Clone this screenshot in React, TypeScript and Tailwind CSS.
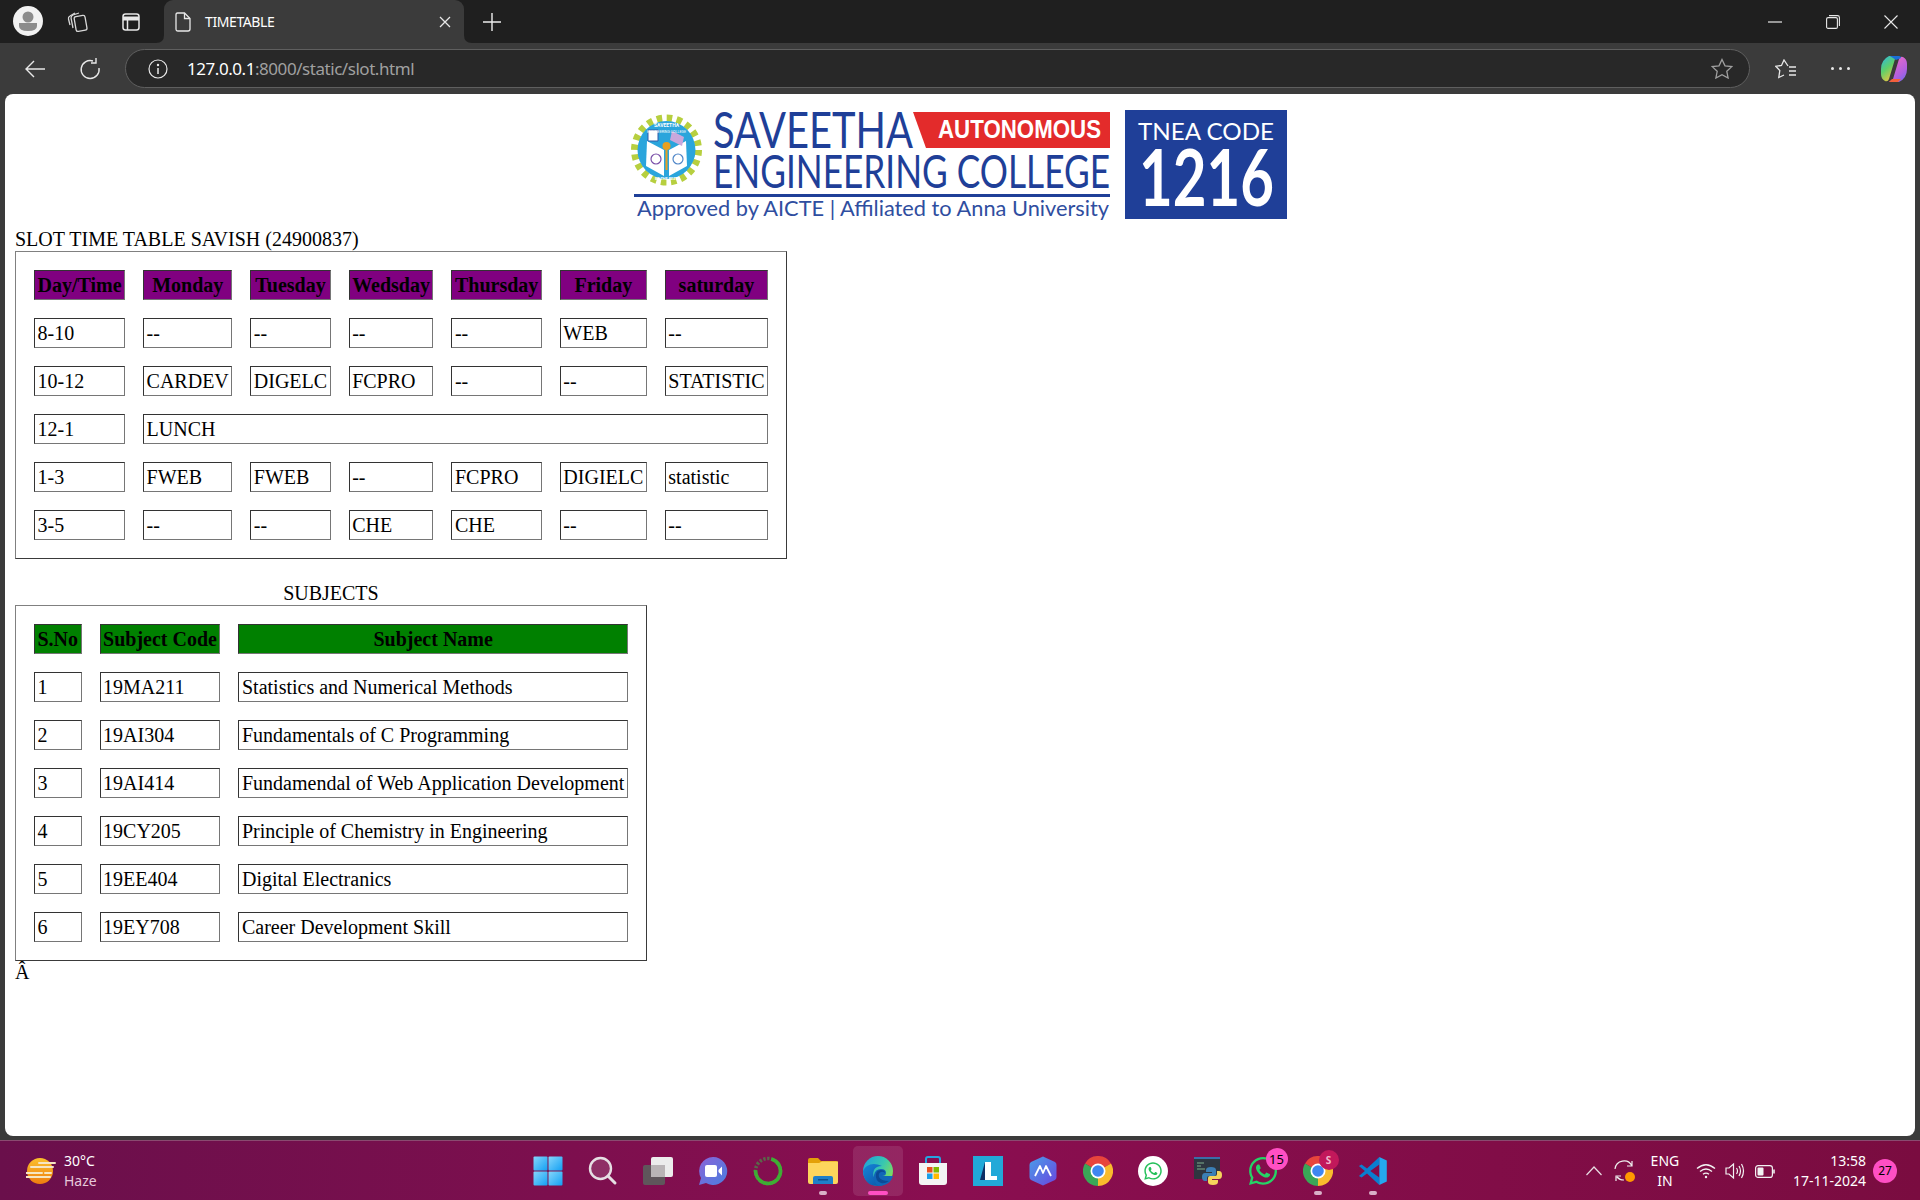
import { FaWhatsapp } from "react-icons/fa";

const chromeFont = { fontFamily: '"Noto Sans", "Open Sans", sans-serif' };

const timetable = [
  ["8-10", "--", "--", "--", "--", "WEB", "--"],
  ["10-12", "CARDEV", "DIGELC", "FCPRO", "--", "--", "STATISTIC"],
  ["12-1", "LUNCH"],
  ["1-3", "FWEB", "FWEB", "--", "FCPRO", "DIGIELC", "statistic"],
  ["3-5", "--", "--", "CHE", "CHE", "--", "--"],
];

const days = ["Day/Time", "Monday", "Tuesday", "Wedsday", "Thursday", "Friday", "saturday"];

const subjects = [
  ["1", "19MA211", "Statistics and Numerical Methods"],
  ["2", "19AI304", "Fundamentals of C Programming"],
  ["3", "19AI414", "Fundamendal of Web Application Development"],
  ["4", "19CY205", "Principle of Chemistry in Engineering"],
  ["5", "19EE404", "Digital Electranics"],
  ["6", "19EY708", "Career Development Skill"],
];

const tableCls =
  "border-separate border-spacing-[18px] border border-t-[#808080] border-l-[#808080] border-r-[#3a3a3a] border-b-[#3a3a3a]";
const cellCls =
  "border border-t-[#333333] border-l-[#333333] border-r-[#767676] border-b-[#767676] px-[2.5px] pt-[3px] pb-[2px] font-normal text-left";
const headCls =
  "border border-t-[#333333] border-l-[#333333] border-r-[#767676] border-b-[#767676] px-[2.5px] pt-[3px] pb-[2px] font-bold text-center";

function Logo() {
  return (
    <svg width="660" height="134" viewBox="630 94 660 134" className="block">
      <defs>
        <clipPath id="seal">
          <circle cx="666.5" cy="150" r="26" />
        </clipPath>
      </defs>
      {/* gear */}
      <circle cx="666.5" cy="150" r="32" fill="none" stroke="#b7cf3f" strokeWidth="7" strokeDasharray="5.5 4.55" />
      <circle cx="666.5" cy="150" r="29" fill="#2aa5dc" />
      <path d="M647 141 L664 150 V176 L646 166Z" fill="#fff" />
      <path d="M686 141 L669 150 V176 L687 166Z" fill="#fff" />
      <path d="M648 130 h10 v11 h-10z" fill="#fff" stroke="#2f5aa8" />
      <path d="M672 131 L684 137 L682 146 L670 140Z" fill="#c9a8dc" />
      <circle cx="656" cy="159" r="5" fill="none" stroke="#7a4fa8" strokeWidth="1.2" />
      <circle cx="678" cy="159" r="5" fill="none" stroke="#4f86c8" strokeWidth="1.2" />
      <path d="M666.5 146 V170" stroke="#e8a020" strokeWidth="2" />
      <circle cx="666.5" cy="146" r="4" fill="#e8a020" />
      <text x="666.5" y="127" textAnchor="middle" fontSize="5" fontWeight="700" fill="#fff" fontFamily="Roboto, sans-serif">
        SAVEETHA
      </text>
      <text x="666.5" y="133" textAnchor="middle" fontSize="3.6" fill="#fff" fontFamily="Roboto, sans-serif">
        ENGINEERING COLLEGE
      </text>
      <text x="666.5" y="180" textAnchor="middle" fontSize="3.8" fontWeight="700" fill="#fff" fontFamily="Roboto, sans-serif">
        BE THE BEST
      </text>

      {/* wordmark */}
      <text x="713" y="148" fontSize="50" fill="#1f3f98" textLength="200" lengthAdjust="spacingAndGlyphs" fontFamily="Lato, sans-serif">
        SAVEETHA
      </text>
      <path d="M913 112 L1110 112 V148 L926 148Z" fill="#e32b2b" />
      <text x="938" y="138" fontSize="25" fontWeight="700" fill="#fff" textLength="163" lengthAdjust="spacingAndGlyphs" fontFamily='"Liberation Sans", sans-serif'>
        AUTONOMOUS
      </text>
      <text x="713" y="188" fontSize="46" fill="#1f3f98" textLength="397" lengthAdjust="spacingAndGlyphs" fontFamily="Lato, sans-serif">
        ENGINEERING COLLEGE
      </text>
      <rect x="634" y="194" width="476" height="3" fill="#1f3f98" />
      <text x="637" y="216" fontSize="21" fill="#2f4ea0" textLength="472" lengthAdjust="spacingAndGlyphs" fontFamily="Lato, sans-serif">
        Approved by AICTE | Affiliated to Anna University
      </text>

      {/* code box */}
      <rect x="1125" y="110" width="162" height="109" fill="#1f3f98" />
      <text x="1138" y="140" fontSize="24" fill="#fff" textLength="136" lengthAdjust="spacingAndGlyphs" fontFamily="Lato, sans-serif">
        TNEA CODE
      </text>
      <text x="1139" y="206" fontSize="78" fontWeight="700" fill="#fff" textLength="135" lengthAdjust="spacingAndGlyphs" fontFamily="Lato, sans-serif">
        1216
      </text>
    </svg>
  );
}

function Copilot() {
  return (
    <svg width="28" height="28" viewBox="0 0 28 28">
      <defs>
        <linearGradient id="copA" x1="0" y1="0" x2="0.6" y2="1">
          <stop offset="0" stopColor="#2ab7e8" />
          <stop offset="0.5" stopColor="#5fd06a" />
          <stop offset="1" stopColor="#f6c23c" />
        </linearGradient>
        <linearGradient id="copB" x1="0.4" y1="0" x2="1" y2="1">
          <stop offset="0" stopColor="#e86ac8" />
          <stop offset="0.6" stopColor="#b05fe0" />
          <stop offset="1" stopColor="#6a6ce8" />
        </linearGradient>
      </defs>
      <path d="M9 1 H19 L15 4 L9 24 Q8 27 5 26 Q1 24 1 19 V14 Q1 5 9 1Z" fill="url(#copA)" />
      <path d="M19 27 H9 L13 24 L19 4 Q20 1 23 2 Q27 4 27 9 V14 Q27 23 19 27Z" fill="url(#copB)" />
      <path d="M10 1 H19 Q21 1 21 3 L16 5 Q13 3 10 1Z" fill="#1b6fd6" />
      <path d="M9 27 H18 L21 24 L12 24Z" fill="#f2603c" />
    </svg>
  );
}

function Chrome({ id }: { id: string }) {
  return (
    <svg width="30" height="30" viewBox="0 0 30 30" data-name={id}>
      <path d="M15 15 L2 7.5 A15 15 0 0 1 28 7.5Z" fill="#e8453c" />
      <path d="M15 15 L28 7.5 A15 15 0 0 1 15 30Z" fill="#f9bb2d" />
      <path d="M15 15 L15 30 A15 15 0 0 1 2 7.5Z" fill="#3aa757" />
      <circle cx="15" cy="15" r="7.5" fill="#fff" />
      <circle cx="15" cy="15" r="5.8" fill="#3f87f0" />
    </svg>
  );
}

function StartIcon() {
  return (
    <svg width="30" height="30" viewBox="0 0 30 30">
      <defs>
        <linearGradient id="win" x1="0" y1="0" x2="1" y2="1">
          <stop offset="0" stopColor="#86d6fb" />
          <stop offset="1" stopColor="#12a0f4" />
        </linearGradient>
      </defs>
      <rect x="0.5" y="0.5" width="14" height="14" rx="1" fill="url(#win)" />
      <rect x="15.5" y="0.5" width="14" height="14" rx="1" fill="url(#win)" />
      <rect x="0.5" y="15.5" width="14" height="14" rx="1" fill="url(#win)" />
      <rect x="15.5" y="15.5" width="14" height="14" rx="1" fill="url(#win)" />
    </svg>
  );
}

function SearchIcon() {
  return (
    <svg width="30" height="30" viewBox="0 0 30 30">
      <circle cx="12.5" cy="12.5" r="10.5" fill="#ffffff22" stroke="#e6dfe3" strokeWidth="2.4" />
      <path d="M20 20 L27 27" stroke="#e6dfe3" strokeWidth="3" strokeLinecap="round" />
    </svg>
  );
}

function TaskViewIcon() {
  return (
    <svg width="32" height="30" viewBox="0 0 32 30">
      <rect x="9" y="1" width="22" height="20" rx="2" fill="#ececec" />
      <rect x="1" y="9" width="22" height="20" rx="2" fill="#5c5c5c" fillOpacity="0.92" />
      <rect x="9" y="9" width="14" height="12" fill="#b9b4b6" />
    </svg>
  );
}

function MeetIcon() {
  return (
    <svg width="30" height="30" viewBox="0 0 30 30">
      <defs>
        <linearGradient id="meet" x1="0" y1="0" x2="1" y2="1">
          <stop offset="0" stopColor="#8a63d8" />
          <stop offset="1" stopColor="#4a7fe0" />
        </linearGradient>
      </defs>
      <path d="M15 1 A14 14 0 1 1 8 27 L1 29 L3 22 A14 14 0 0 1 15 1Z" fill="url(#meet)" />
      <rect x="7" y="9" width="12" height="12" rx="2" fill="#fff" />
      <path d="M20.5 14 L24 10.5 V19.5 L20.5 16Z" fill="#fff" />
    </svg>
  );
}

function RingIcon() {
  return (
    <svg width="30" height="30" viewBox="0 0 30 30">
      <circle cx="15" cy="15" r="12.5" fill="none" stroke="#3fb52c" strokeWidth="3.6" strokeDasharray="56 23" transform="rotate(-75 15 15)" />
      <circle cx="15" cy="15" r="12.5" fill="none" stroke="#3fa246" strokeWidth="3.6" strokeDasharray="2.4 1.6" strokeDashoffset="0" transform="rotate(175 15 15)" pathLength="79" opacity="0.6" />
    </svg>
  );
}

function FolderIcon() {
  return (
    <svg width="30" height="30" viewBox="0 0 30 30">
      <path d="M0 4 Q0 2 2 2 H10 L13 5 H28 Q30 5 30 7 V10 H0Z" fill="#e3a008" />
      <path d="M0 7 H11 L14 5.5 H30 V26 Q30 28 28 28 H2 Q0 28 0 26Z" fill="#fdd55c" />
      <path d="M5 28 V22 Q5 20 7 20 H23 Q25 20 25 22 V28Z" fill="#1f7fc8" />
      <rect x="10" y="23" width="10" height="1.5" fill="#0e4f8c" />
    </svg>
  );
}

function EdgeIcon() {
  return (
    <svg width="30" height="30" viewBox="0 0 30 30">
      <defs>
        <linearGradient id="edgeA" x1="0" y1="0" x2="1" y2="0.6">
          <stop offset="0" stopColor="#1a9de0" />
          <stop offset="0.6" stopColor="#38c7b0" />
          <stop offset="1" stopColor="#7fdc5f" />
        </linearGradient>
        <linearGradient id="edgeB" x1="0" y1="0" x2="1" y2="1">
          <stop offset="0" stopColor="#1585d8" />
          <stop offset="1" stopColor="#0b4fa0" />
        </linearGradient>
      </defs>
      <circle cx="15" cy="15" r="15" fill="url(#edgeA)" />
      <path d="M0 15 Q1 30 15 30 Q22 30 27 25 Q20 27 15 25 Q8 21 11 14 Q13 10 19 10 Q10 6 4 10 Q1 12 0 15Z" fill="url(#edgeB)" />
      <path d="M15 30 Q10 26 11 19 Q12 13 18 13 Q23 13 23 17 Q23 20 19 20 H30 Q28 27 21 29 Q18 30 15 30Z" fill="#1166b8" />
      <path d="M13 18 Q14 14 18 14 Q22 14 22 17 Q20 15 18 16 Q15 17 16 21 Q18 25 26 25 Q22 28 18 27 Q12 25 13 18Z" fill="#0b4a96" />
    </svg>
  );
}

function StoreIcon() {
  return (
    <svg width="30" height="30" viewBox="0 0 30 30">
      <path d="M8 8 V3 Q8 1 10 1 H20 Q22 1 22 3 V8" fill="none" stroke="#25a5e0" strokeWidth="2" />
      <path d="M1 7 H29 V26 Q29 29 26 29 H4 Q1 29 1 26Z" fill="#f4f4f4" />
      <rect x="9" y="11" width="5.5" height="5.5" fill="#e8501f" />
      <rect x="15.5" y="11" width="5.5" height="5.5" fill="#7fba00" />
      <rect x="9" y="17.5" width="5.5" height="5.5" fill="#1a9fe8" />
      <rect x="15.5" y="17.5" width="5.5" height="5.5" fill="#ffb900" />
    </svg>
  );
}

function LIcon() {
  return (
    <svg width="30" height="30" viewBox="0 0 30 30">
      <rect width="30" height="30" fill="#22a9d8" />
      <path d="M7 24 L12 6 H17 L14 20 H24 V24Z" fill="#0f2f66" />
      <path d="M12 6 H18 V20 H24 V24 H12Z" fill="#fff" />
    </svg>
  );
}

function HexIcon() {
  return (
    <svg width="28" height="30" viewBox="0 0 28 30">
      <defs>
        <linearGradient id="hex" x1="0" y1="0" x2="1" y2="1">
          <stop offset="0" stopColor="#4a9de8" />
          <stop offset="1" stopColor="#6a46e0" />
        </linearGradient>
      </defs>
      <path d="M14 0.5 L26 6 Q27.5 7 27.5 9 V21 Q27.5 23 26 24 L14 29.5 L2 24 Q0.5 23 0.5 21 V9 Q0.5 7 2 6Z" fill="url(#hex)" />
      <path d="M6 20 L11 10 L14 17 L17 10 L22 20" fill="none" stroke="#fff" strokeWidth="1.8" strokeLinejoin="round" />
    </svg>
  );
}

function WhatsappWhite() {
  return (
    <div className="flex h-[30px] w-[30px] items-center justify-center rounded-full bg-white text-[#25c05a]">
      <FaWhatsapp size={20} />
    </div>
  );
}

function PythonIcon() {
  return (
    <svg width="30" height="30" viewBox="0 0 30 30">
      <rect x="1" y="1" width="26" height="22" fill="#2e3640" />
      <rect x="1" y="1" width="26" height="2" fill="#3a6ea8" />
      <path d="M4 7 H11 M4 10 H8 M4 13 H12" stroke="#7fae8c" strokeWidth="1" />
      <path d="M18 11 Q13 11 13 14 V16 H19 V17 H12 Q9 17 9 21 Q9 25 12 25 H14 V22 Q14 20 16 20 H21 Q23 20 23 18 V14 Q23 11 18 11Z" fill="#3b7fb5" />
      <path d="M20 29 Q25 29 25 26 V24 H19 V23 H26 Q29 23 29 19 Q29 15 26 15 H24 V18 Q24 20 22 20 H17 Q15 20 15 22 V26 Q15 29 20 29Z" fill="#f5d45c" />
    </svg>
  );
}

function VSCodeIcon() {
  return (
    <svg width="30" height="30" viewBox="0 0 100 100">
      <path d="M71 3 L30 42 L12 28 L3 33 L23 50 L3 67 L12 72 L30 58 L71 97 V72 L41 50 L71 28Z" fill="#0a7fd0" />
      <path d="M71 3 L96 15 V85 L71 97Z" fill="#25a8ee" />
    </svg>
  );
}

function TaskIcon({ children, dot, active }: { children: React.ReactNode; dot?: boolean; active?: boolean }) {
  return (
    <div className="relative flex h-[50px] w-[55px] items-center justify-center">
      {active && <div className="absolute left-[2.5px] top-0 h-[50px] w-[50px] rounded-[5px] bg-white/10" />}
      <div className="relative">{children}</div>
      {dot && <div className="absolute bottom-[1px] left-[23.5px] h-[4px] w-[8px] rounded-full bg-[#d9b0c8]" />}
      {active && <div className="absolute bottom-[1px] left-[17.5px] h-[4px] w-[20px] rounded-full bg-[#ff4fc4]" />}
    </div>
  );
}

export default function App() {
  return (
    <div className="flex h-screen flex-col overflow-hidden bg-[#3b3b3b]">
      {/* tab strip */}
      <header className="flex h-[43px] shrink-0 items-end bg-[#1f1f1f] text-white" style={chromeFont}>
        <div className="ml-[13px] mb-[7px] flex h-[30px] w-[30px] items-center justify-center overflow-hidden rounded-full bg-[#f2f2f2]">
          <svg width="30" height="30" viewBox="0 0 30 30">
            <circle cx="15" cy="11" r="5.5" fill="#8c8c8c" />
            <path d="M6 17 H24 V20 Q24 25 15 25 Q6 25 6 20Z" fill="#8c8c8c" />
          </svg>
        </div>
        <div className="ml-[8px] flex h-full w-[53px] items-center justify-center">
          <svg width="22" height="22" viewBox="0 0 22 22" fill="none" stroke="#d8d8d8" strokeWidth="1.3">
            <rect x="8" y="5" width="11" height="15" rx="2" transform="rotate(-10 13 12)" />
            <path d="M6 17 L4 7 Q4 5 6 4 L12 2" />
            <path d="M3 14 L1.5 8 Q1 6 3 5 L8 2" />
          </svg>
        </div>
        <div className="flex h-full w-[53px] items-center justify-center">
          <svg width="20" height="20" viewBox="0 0 20 20" fill="none" stroke="#e8e8e8" strokeWidth="1.5">
            <rect x="2" y="2" width="16" height="16" rx="2.5" />
            <path d="M2 6.5 H18" strokeWidth="4" />
            <path d="M6.5 7 V18" />
          </svg>
        </div>
        <div className="relative ml-[7px] flex h-[43px] w-[300px] items-center rounded-t-[9px] bg-[#3b3b3b] pl-[11px] pr-[13px]">
          <svg className="absolute -left-[8px] bottom-0" width="8" height="8" viewBox="0 0 8 8">
            <path d="M8 0 V8 H0 Q8 8 8 0Z" fill="#3b3b3b" />
          </svg>
          <svg className="absolute -right-[8px] bottom-0" width="8" height="8" viewBox="0 0 8 8">
            <path d="M0 0 V8 H8 Q0 8 0 0Z" fill="#3b3b3b" />
          </svg>
          <svg width="16" height="20" viewBox="0 0 16 20" fill="none" stroke="#e8e8e8" strokeWidth="1.3">
            <path d="M2.5 1 H9.5 L15 6.5 V17 Q15 19 13 19 H3 Q1 19 1 17 V3 Q1 1 2.5 1Z" />
            <path d="M9.5 1 V6.5 H15" />
          </svg>
          <span className="ml-[14px] flex-1 text-[14px] tracking-[-0.4px]">TIMETABLE</span>
          <svg width="12" height="12" viewBox="0 0 12 12" stroke="#e8e8e8" strokeWidth="1.3">
            <path d="M1 1 L11 11 M11 1 L1 11" />
          </svg>
        </div>
        <div className="mb-[12px] ml-[19px] flex items-center">
          <svg width="18" height="18" viewBox="0 0 18 18" stroke="#ededed" strokeWidth="1.4">
            <path d="M9 0 V18 M0 9 H18" />
          </svg>
        </div>
        <div className="flex-1" />
        <div className="flex h-full w-[58px] items-center justify-center">
          <svg width="14" height="2" viewBox="0 0 14 2"><path d="M0 1 H14" stroke="#e8e8e8" strokeWidth="1.2" /></svg>
        </div>
        <div className="flex h-full w-[58px] items-center justify-center">
          <svg width="14" height="14" viewBox="0 0 14 14" fill="none" stroke="#e8e8e8" strokeWidth="1.1">
            <rect x="0.6" y="2.6" width="10.8" height="10.8" rx="1.5" />
            <path d="M3 0.6 H11.5 Q13.4 0.6 13.4 2.5 V11" />
          </svg>
        </div>
        <div className="flex h-full w-[58px] items-center justify-center">
          <svg width="14" height="14" viewBox="0 0 14 14" stroke="#e8e8e8" strokeWidth="1.1">
            <path d="M0.5 0.5 L13.5 13.5 M13.5 0.5 L0.5 13.5" />
          </svg>
        </div>
      </header>

      {/* toolbar */}
      <div className="flex h-[51px] shrink-0 items-center bg-[#3b3b3b] text-white" style={chromeFont}>
        <div className="ml-[7px] flex w-[55px] justify-center">
          <svg width="20" height="18" viewBox="0 0 20 18" fill="none" stroke="#e8e8e8" strokeWidth="1.4">
            <path d="M20 9 H1 M9 1 L1 9 L9 17" />
          </svg>
        </div>
        <div className="flex w-[55px] justify-center">
          <svg width="22" height="22" viewBox="0 0 22 22" fill="none" stroke="#e8e8e8" strokeWidth="1.4">
            <path d="M14 3 A9 9 0 1 0 20 10" />
            <path d="M17 0 V5 H12" />
          </svg>
        </div>
        <div className="ml-[8px] flex h-[39px] flex-1 items-center rounded-full border border-[#5f5f5f] bg-[#282828] pl-[22px] pr-[16px]">
          <svg width="20" height="20" viewBox="0 0 20 20" fill="none" stroke="#e8e8e8" strokeWidth="1.2">
            <circle cx="10" cy="10" r="9" />
            <path d="M10 9 V15" strokeWidth="1.5" />
            <circle cx="10" cy="6" r="0.6" fill="#e8e8e8" />
          </svg>
          <span className="ml-[19px] flex-1 text-[17px] tracking-[-0.45px] text-white">
            127.0.0.1<span className="text-[#a0a0a0]">:8000/static/slot.html</span>
          </span>
          <svg width="22" height="21" viewBox="0 0 22 21" fill="none" stroke="#a0a0a0" strokeWidth="1.3">
            <path d="M11 1.5 L14 7.8 L20.8 8.6 L15.8 13.3 L17.1 20 L11 16.7 L4.9 20 L6.2 13.3 L1.2 8.6 L8 7.8Z" />
          </svg>
        </div>
        <div className="ml-[8px] flex w-[55px] justify-center">
          <svg width="22" height="20" viewBox="0 0 22 20" fill="none" stroke="#e8e8e8" strokeWidth="1.3">
            <path d="M13 7 L9 1 L6.5 6.5 L0.8 7.3 L4.8 11.5 L3.8 18.5 L9 16" />
            <path d="M14 8 H21 M14 12 H21 M14 16 H21" />
          </svg>
        </div>
        <div className="flex w-[55px] justify-center gap-[3px]">
          <span className="h-[3px] w-[3px] rounded-full bg-[#e8e8e8]" />
          <span className="ml-[2px] h-[3px] w-[3px] rounded-full bg-[#e8e8e8]" />
          <span className="ml-[2px] h-[3px] w-[3px] rounded-full bg-[#e8e8e8]" />
        </div>
        <div className="flex w-[52px] justify-center">
          <Copilot />
        </div>
      </div>

      {/* page */}
      <div className="flex-1 px-[5px] pb-[4px]">
        <main
          className="h-full overflow-hidden rounded-[8px] bg-white pl-[10px] text-[20px] leading-[23px] text-black"
          style={{ fontFamily: '"Liberation Serif", "Times New Roman", serif' }}
        >
          <div className="-ml-[10px] flex justify-center">
            <Logo />
          </div>
          <div>SLOT TIME TABLE SAVISH (24900837)</div>
          <table className={tableCls}>
            <tbody>
              <tr>
                {days.map((d) => (
                  <th key={d} className={`${headCls} bg-[#800080]`}>
                    {d}
                  </th>
                ))}
              </tr>
              {timetable.map((row) => (
                <tr key={row[0]}>
                  {row.map((c, i) => (
                    <td key={i} colSpan={row.length === 2 && i === 1 ? 6 : 1} className={cellCls}>
                      {c}
                    </td>
                  ))}
                </tr>
              ))}
            </tbody>
          </table>
          <br />
          <table className={tableCls}>
            <caption>SUBJECTS</caption>
            <tbody>
              <tr>
                <th className={`${headCls} bg-[#008000]`}>S.No</th>
                <th className={`${headCls} bg-[#008000]`}>Subject Code</th>
                <th className={`${headCls} bg-[#008000]`}>Subject Name</th>
              </tr>
              {subjects.map((row) => (
                <tr key={row[0]}>
                  {row.map((c) => (
                    <td key={c} className={cellCls}>
                      {c}
                    </td>
                  ))}
                </tr>
              ))}
            </tbody>
          </table>
          <div>Â</div>
        </main>
      </div>

      {/* taskbar */}
      <footer
        className="grid h-[60px] shrink-0 grid-cols-[1fr_auto_1fr] items-center border-t border-[#8a4a70] bg-linear-to-r from-[#6a0f4b] via-[#8a0e50] to-[#7a0c40] text-white"
        style={chromeFont}
      >
        <div className="flex items-center pl-[26px]">
          <svg width="30" height="28" viewBox="0 0 30 28">
            <defs>
              <linearGradient id="sun" x1="0" y1="0" x2="0" y2="1">
                <stop offset="0" stopColor="#fbc02d" />
                <stop offset="1" stopColor="#ee7d10" />
              </linearGradient>
            </defs>
            <circle cx="14" cy="14" r="13" fill="url(#sun)" />
            <path d="M13 6 H29 M5 10 H27 M0 16 H16 M19 16 H25 M0 20 H24" stroke="#f6e6c2" strokeWidth="2" strokeLinecap="round" />
          </svg>
          <div className="ml-[8px] text-[14px] leading-[20px]">
            <div>30°C</div>
            <div className="text-[#e6c8da]">Haze</div>
          </div>
        </div>

        <div className="flex items-center pt-[5px] pb-[5px]">
          <TaskIcon><StartIcon /></TaskIcon>
          <TaskIcon><SearchIcon /></TaskIcon>
          <TaskIcon><TaskViewIcon /></TaskIcon>
          <TaskIcon><MeetIcon /></TaskIcon>
          <TaskIcon><RingIcon /></TaskIcon>
          <TaskIcon dot><FolderIcon /></TaskIcon>
          <TaskIcon active><EdgeIcon /></TaskIcon>
          <TaskIcon><StoreIcon /></TaskIcon>
          <TaskIcon><LIcon /></TaskIcon>
          <TaskIcon><HexIcon /></TaskIcon>
          <TaskIcon><Chrome id="c1" /></TaskIcon>
          <TaskIcon><WhatsappWhite /></TaskIcon>
          <TaskIcon><PythonIcon /></TaskIcon>
          <TaskIcon>
            <div className="text-[#25d366]"><FaWhatsapp size={32} /></div>
            <div className="absolute -right-[9px] -top-[7px] flex h-[22px] w-[22px] items-center justify-center rounded-full bg-[#ff4fc4] text-[13px] leading-none text-black">
              15
            </div>
          </TaskIcon>
          <TaskIcon dot>
            <Chrome id="c2" />
            <div className="absolute -right-[6px] -top-[6px] flex h-[20px] w-[20px] items-center justify-center rounded-full bg-[#c2185b] text-[10px] font-bold leading-none text-[#f0b8cc]">
              S
            </div>
          </TaskIcon>
          <TaskIcon dot><VSCodeIcon /></TaskIcon>
        </div>

        <div className="flex items-center justify-end pr-[23px]">
          <svg width="16" height="10" viewBox="0 0 16 10" fill="none" stroke="#e8dde3" strokeWidth="1.2">
            <path d="M0.5 9 L8 1 L15.5 9" />
          </svg>
          <div className="relative ml-[12px]">
            <svg width="20" height="22" viewBox="0 0 20 22" fill="none" stroke="#eee" strokeWidth="1.2">
              <path d="M1 9 A9 9 0 0 1 18 6 M18 1 V6 H13" />
              <path d="M3 17 A9 9 0 0 0 10 20 M2 21 V16 H7" />
            </svg>
            <div className="absolute -right-[1px] bottom-0 h-[10px] w-[10px] rounded-full bg-[#ff9800]" />
          </div>
          <div className="ml-[16px] w-[30px] text-center text-[14px] leading-[20px]">
            <div>ENG</div>
            <div>IN</div>
          </div>
          <svg className="ml-[16px]" width="20" height="16" viewBox="0 0 20 16" fill="none" stroke="#f2f2f2" strokeWidth="1.4">
            <path d="M1 5.5 Q10 -2 19 5.5 M4 8.5 Q10 3.5 16 8.5 M7 11.3 Q10 9 13 11.3" />
            <circle cx="10" cy="14" r="1.2" fill="#f2f2f2" stroke="none" />
          </svg>
          <svg className="ml-[9px]" width="21" height="18" viewBox="0 0 21 18" fill="none" stroke="#f2f2f2" strokeWidth="1.2">
            <path d="M1 6 H4 L8.5 2 V16 L4 12 H1Z" />
            <path d="M11.5 6 Q13.5 9 11.5 12 M14 4 Q17 9 14 14 M16.5 2 Q20.5 9 16.5 16" />
          </svg>
          <svg className="ml-[9px]" width="20" height="13" viewBox="0 0 20 13" fill="none" stroke="#f2f2f2" strokeWidth="1.2">
            <rect x="0.6" y="0.6" width="16.8" height="11.8" rx="2.5" />
            <rect x="2.5" y="2.5" width="6" height="8" rx="1" fill="#f2f2f2" stroke="none" />
            <path d="M19 4.5 V8.5" strokeWidth="1.6" />
          </svg>
          <div className="ml-[18px] text-right text-[14px] leading-[20px]">
            <div>13:58</div>
            <div>17-11-2024</div>
          </div>
          <div className="ml-[7px] flex h-[24px] w-[24px] items-center justify-center rounded-full bg-[#ff4fc4] text-[12px] leading-none text-black">
            27
          </div>
        </div>
      </footer>
    </div>
  );
}
